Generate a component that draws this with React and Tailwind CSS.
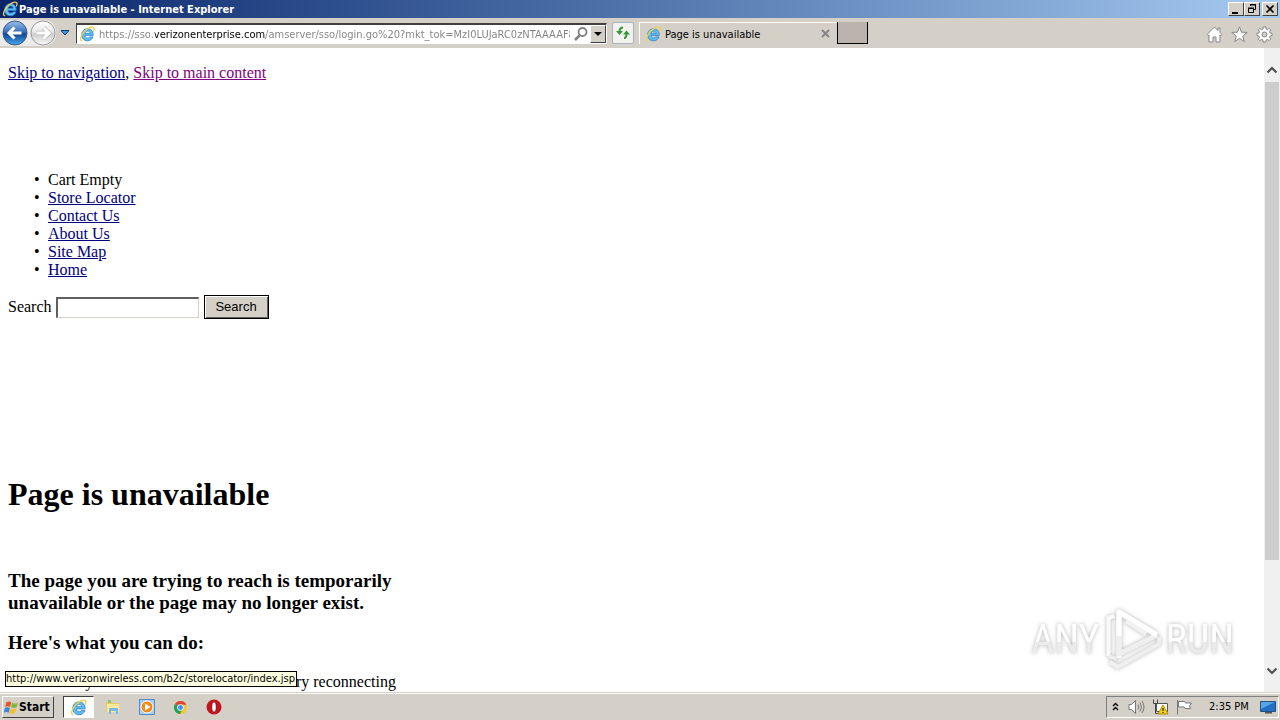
import React from "react";

const uiFont = "font-['DejaVu_Sans_Condensed','DejaVu_Sans',sans-serif]";
const raised =
  "border border-t-white border-l-white border-r-[#404040] border-b-[#404040] bg-[#d4d0c8]";

function IeLogo({ className }) {
  return (
    <svg viewBox="0 0 16 16" className={className} aria-hidden="true">
      <path
        d="M14.200 9.400H6c.1 1.700 1.200 2.600 2.700 2.600 1.100 0 1.800-.4 2.200-1.100h3.100c-.8 2.400-2.800 3.900-5.500 3.900-3.500 0-5.900-2.500-5.900-5.900S5 2.700 8.500 2.700c3.600 0 5.900 2.600 5.700 6.700zM6.100 7.300h5C11 5.900 10 5.100 8.700 5.100S6.300 5.900 6.100 7.300z"
        fill="#62bdf0"
        stroke="#2a83cf"
        strokeWidth=".8"
      />
      <path
        d="M2.600 14.700C.4 14 1.700 9.800 4.900 6 8.200 2.200 12.800.3 14.500 1.600c.8.700.6 2-.1 3.400"
        fill="none"
        stroke="#f2cf4a"
        strokeWidth="1.300"
        strokeLinecap="round"
      />
    </svg>
  );
}

function NavArrow({ forward }) {
  return (
    <svg viewBox="0 0 26 26" className="size-[26px]" aria-hidden="true">
      <defs>
        <linearGradient id={forward ? "fwd" : "back"} x1="0" y1="0" x2="0" y2="1">
          <stop offset="0" stopColor={forward ? "#ffffff" : "#9dc0ea"} />
          <stop offset=".45" stopColor={forward ? "#e9e9e9" : "#3a70ba"} />
          <stop offset=".55" stopColor={forward ? "#cfcfcf" : "#134795"} />
          <stop offset="1" stopColor={forward ? "#f8f8f8" : "#46acee"} />
        </linearGradient>
      </defs>
      <circle cx="13" cy="13" r="12" fill={forward ? "url(#fwd)" : "url(#back)"} stroke={forward ? "#9a9a9a" : "#3d5a86"} />
      <path
        d={forward ? "M6.500 13h12M13.500 7.500l5.500 5.500-5.500 5.500" : "M19.500 13h-12M12.500 7.500L7 13l5.500 5.500"}
        fill="none"
        stroke={forward ? "#b8b8b8" : "none"}
        strokeWidth="4.500"
      />
      <path
        d={forward ? "M6.500 13h12M13.500 7.500l5.500 5.500-5.500 5.500" : "M19.500 13h-12M12.500 7.500L7 13l5.500 5.500"}
        fill="none"
        stroke="#fff"
        strokeWidth="3"
      />
    </svg>
  );
}

function TitleBar() {
  const btn = `${raised} flex h-[14px] w-4 items-center justify-center`;
  return (
    <header className="flex h-[18px] shrink-0 items-center bg-linear-to-r from-[#0a246a] to-[#a6caf0] px-[2px]">
      <IeLogo className="size-4" />
      <span className={`${uiFont} ml-px flex-1 pt-[2px] text-[11px] leading-4 font-bold text-white`}>
        Page is unavailable - Internet Explorer
      </span>
      <button className={btn} aria-label="Minimize">
        <svg viewBox="0 0 14 12" className="h-3 w-[14px]"><path d="M3 9h6v2H3z" /></svg>
      </button>
      <button className={btn} aria-label="Restore">
        <svg viewBox="0 0 14 12" className="h-3 w-[14px]" fill="none" stroke="#000">
          <path d="M5.500 3V1.500h5v5H9M5 2h6M3.500 5.500h5v4h-5zM3 5h6" />
        </svg>
      </button>
      <button className={`${btn} ml-[2px]`} aria-label="Close">
        <svg viewBox="0 0 14 12" className="h-3 w-[14px]"><path d="M3.500 2.500l7 7M10.500 2.500l-7 7" stroke="#000" strokeWidth="1.700" /></svg>
      </button>
    </header>
  );
}

function Toolbar() {
  return (
    <div className="flex h-[30px] shrink-0 items-center bg-[#d4d0c8]">
      <nav className="flex h-[26px] items-center rounded-r-xl bg-[#eceae6] pl-[2px]">
        <button aria-label="Back"><NavArrow /></button>
        <button aria-label="Forward" className="ml-[2px]"><NavArrow forward /></button>
      </nav>
      <button aria-label="Recent pages" className="ml-[4px]">
        <svg viewBox="0 0 10 6" className="h-[6px] w-[10px]"><path d="M1 .5h8L5 5z" fill="#3a9be0" stroke="#123a6e" /></svg>
      </button>
      <div className="ml-[6px] flex h-[21px] w-[531px] items-center border border-t-2 border-[#404040] border-r-white border-b-white bg-white pl-[2px]">
        <IeLogo className="size-4 shrink-0" />
        <input
          aria-label="Address"
          readOnly
          value="https://sso.verizonenterprise.com/amserver/sso/login.go%20?mkt_tok=MzI0LUJaRC0zNTAAAAF8"
          className={`${uiFont} ml-1 h-[18px] min-w-0 flex-1 bg-linear-[90deg,#808080_56px,#000_56px,#000_166px,#808080_166px] bg-clip-text pt-[2px] text-[11px] text-transparent outline-none`}
        />
        <button aria-label="Search" className="ml-1">
          <svg viewBox="0 0 14 14" className="size-[14px]" fill="none" stroke="#808080">
            <circle cx="8.500" cy="5" r="4" strokeWidth="1.800" />
            <path d="M5.500 8.500L1 13" strokeWidth="2.500" />
          </svg>
        </button>
        <button aria-label="Show address bar list" className={`${raised} ml-[2px] flex h-[18px] w-4 items-center justify-center`}>
          <svg viewBox="0 0 8 4" className="h-1 w-2"><path d="M0 0h8L4 4z" /></svg>
        </button>
      </div>
      <button aria-label="Refresh" className="ml-[5px] flex h-[22px] w-[22px] items-center justify-center rounded-[2px] border border-[#a9b4bd] bg-[#f1f1ee]">
        <svg viewBox="0 0 16 16" className="size-4" fill="none" stroke="#35963a" strokeWidth="2">
          <path d="M8 2.500C5.500 2.500 4.500 4 4.500 7M9 13c2 0 2.500-1.500 2.500-4.500" />
          <path d="M1 6h7l-3.500 4zM8 9.500h7L11.500 5.500z" fill="#35963a" stroke="none" />
        </svg>
      </button>
      <div className="ml-[5px] flex h-[22px] w-[198px] items-center border-t border-l border-white pl-[5px]">
        <IeLogo className="size-4" />
        <span className={`${uiFont} ml-1 flex-1 pt-[2px] text-[11px] leading-4 text-black`}>Page is unavailable</span>
        <button aria-label="Close tab" className="mr-[7px]">
          <svg viewBox="0 0 9 9" className="size-[9px]"><path d="M1 1l7 7M8 1L1 8" stroke="#858585" strokeWidth="2" /></svg>
        </button>
      </div>
      <button aria-label="New tab" className="h-[22px] w-[31px] border border-t-0 border-black bg-[#bcb4ac]" />
      <div className="ml-auto flex items-center gap-2 pt-[2px] pr-[7px]">
        <button aria-label="Home">
          <svg viewBox="0 0 17 17" className="size-[17px]" fill="#fff" stroke="#858585" strokeLinejoin="round">
            <path d="M8.500 1L1 8.500l1.200 1.200L3 9v7h4v-5h3v5h4V9l.8.700L16 8.500l-2-2V2h-2v2.500z" />
          </svg>
        </button>
        <button aria-label="Favorites">
          <svg viewBox="0 0 17 17" className="size-[17px]" fill="#fff" stroke="#858585" strokeLinejoin="round">
            <path d="M8.500 .8l2 5.400 5.700.2-4.500 3.600 1.600 5.600-4.800-3.300-4.800 3.300L5.300 10 .8 6.400l5.700-.2z" />
          </svg>
        </button>
        <button aria-label="Tools">
          <svg viewBox="0 0 17 17" className="size-[17px]" fill="#fff" stroke="#858585" strokeLinejoin="round">
            <path d="M7.200 1h2.600l.4 2.100 1.200.5 1.800-1.200 1.500 1.500-1.200 1.800.5 1.200 2 .4v2.400l-2 .4-.5 1.200 1.200 1.800-1.500 1.500-1.800-1.200-1.200.5-.4 2.100H7.200l-.4-2.100-1.200-.5-1.800 1.200-1.500-1.500 1.200-1.800-.5-1.200-2-.4V7.300l2-.4.5-1.200-1.200-1.800 1.500-1.500 1.800 1.200 1.200-.5z" />
            <circle cx="8.500" cy="8.500" r="2.500" fill="#d4d0c8" />
          </svg>
        </button>
      </div>
    </div>
  );
}

function Watermark() {
  const word =
    "font-['Liberation_Sans_Narrow','Roboto_Condensed',sans-serif] bg-linear-to-b from-white from-55% to-[#ebebeb] to-55% bg-clip-text text-[40px] leading-none text-transparent drop-shadow-[0_0_2px_#b4b4b4]";
  return (
    <div className="pointer-events-none absolute right-[46px] bottom-5 flex items-center gap-1">
      <span className={word}>ANY</span>
      <svg viewBox="0 0 58 64" className="h-16 w-[58px] drop-shadow-[0_0_2px_#b4b4b4]" fill="none" strokeLinejoin="round">
        <path d="M4.500 48V10l6-2" stroke="#fafafa" strokeWidth="4" />
        <path d="M15 50V4l38 23" stroke="#fff" strokeWidth="5" />
        <path d="M15 4v42l38-19" stroke="#efefef" strokeWidth="5" />
        <path d="M15 28V4l38 23" stroke="#fff" strokeWidth="5" />
        <path d="M4.500 48l8 3M12 60l43-24v-7" stroke="#efefef" strokeWidth="4" />
        <path d="M6 54l8 5M22 13l20 13" stroke="#f2f2f2" strokeWidth="4" />
      </svg>
      <span className={word}>RUN</span>
    </div>
  );
}

const links = ["Store Locator", "Contact Us", "About Us", "Site Map", "Home"];
const bullet = "before:inline-block before:w-[14px] before:content-['•']";

function Page() {
  return (
    <div className="relative flex min-h-0 flex-1 bg-white">
      <main className="min-w-0 flex-1 overflow-hidden px-2 pt-4 font-['Liberation_Serif',serif] text-[16px] leading-[18px] text-black">
        <p>
          <a href="#navigation" className="text-[#000080] underline">Skip to navigation</a>,{" "}
          <a href="#content" className="text-[#800080] underline">Skip to main content</a>
        </p>
        <ul id="navigation" className="mt-[89px] pl-[26px]">
          <li className={bullet}>Cart Empty</li>
          {links.map((l) => (
            <li key={l} className={bullet}><a href="#content" className="text-[#000080] underline">{l}</a></li>
          ))}
        </ul>
        <form className="mt-4 flex h-6 items-center" onSubmit={(e) => e.preventDefault()}>
          <label htmlFor="q">Search</label>
          <input id="q" className="ml-1 h-[21px] w-[143px] border border-t-2 border-l-2 border-[#d4d0c8] border-t-[#606060] border-l-[#606060] bg-white px-1 outline-none" />
          <button className="ml-[5px] h-6 w-[65px] border border-black bg-[#d4d0c8] font-['Liberation_Sans',sans-serif] text-[13px] shadow-[inset_1px_1px_0_#fff,inset_-1px_-1px_0_#606060]">
            Search
          </button>
        </form>
        <h1 id="content" className="mt-[157px] text-[32px] leading-9 font-bold">Page is unavailable</h1>
        <h3 className="mt-[58px] w-[390px] text-[19px] leading-[22px] font-bold">
          The page you are trying to reach is temporarily unavailable or the page may no longer exist.
        </h3>
        <h3 className="mt-[18px] text-[19px] leading-[22px] font-bold">Here's what you can do:</h3>
        <p className="mt-[19px] whitespace-nowrap">Check with your network administrator and try reconnecting</p>
      </main>
      <div className="flex w-4 shrink-0 flex-col bg-[#f0f0f0] px-px" aria-hidden="true">
        <div className="flex h-[34px] items-center justify-center pt-[10px]">
          <svg viewBox="0 0 12 8" className="h-2 w-3"><path d="M1.500 6.500L6 2l4.500 4.500" fill="none" stroke="#505050" strokeWidth="2.200" /></svg>
        </div>
        <div className="min-h-0 flex-1"><div className="h-[83%] bg-[#cdcdcd]" /></div>
        <div className="flex h-[34px] items-start justify-center pt-[9px]">
          <svg viewBox="0 0 12 8" className="h-2 w-3"><path d="M1.500 1.500L6 6l4.500-4.500" fill="none" stroke="#505050" strokeWidth="2.200" /></svg>
        </div>
      </div>
      <div className={`${uiFont} absolute bottom-[5px] left-[5px] h-4 border border-black bg-[#ffffe1] pr-px text-[11px] leading-[14px] whitespace-nowrap text-black`}>
        http://www.verizonwireless.com/b2c/storelocator/index.jsp
      </div>
      <Watermark />
    </div>
  );
}

function Taskbar() {
  return (
    <footer className="flex h-7 shrink-0 items-center border-t border-[#d4d0c8] bg-[#d4d0c8] shadow-[inset_0_1px_0_#fff]">
      <button className={`${raised} ${uiFont} mt-px ml-[2px] flex h-[22px] w-[52px] items-center pl-px text-[12px] font-bold text-black`}>
        <svg viewBox="0 0 16 16" className="size-[15px] shrink-0">
          <path d="M2.500 2.500c2.200-1.400 3.700-1 5.300 0L6.500 7.500c-1.700-1-3.200-1.200-5.300 0z" fill="#e8542a" />
          <path d="M8.800 3c1.800 1 3.600 1 6-.2l-1.400 5c-2.200 1.200-3.900 1-5.900 0z" fill="#7cb93c" />
          <path d="M1 8.500c2.100-1.200 3.700-1 5.300 0L5 13.500c-1.700-1-3.100-1.200-5.200 0z" fill="#3f86d8" />
          <path d="M7.200 9c1.800 1 3.600 1 5.900-.2l-1.400 5c-2.200 1.200-3.900 1-5.800 0z" fill="#f4bf2c" />
        </svg>
        Start
      </button>
      <div className="mt-px ml-[9px] flex h-[22px] items-center">
        <button aria-label="Internet Explorer" className="flex h-[22px] w-[31px] items-center justify-center border border-[#404040] border-r-white border-b-white bg-white">
          <IeLogo className="size-[17px]" />
        </button>
        <button aria-label="Explorer" className="ml-[11px]">
          <svg viewBox="0 0 16 16" className="size-4">
            <path d="M1 3h5l1 1h7v9H1z" fill="#e8c95c" />
            <path d="M2 5h12v8H2z" fill="#fbe899" />
            <path d="M4 9h9v6h-2v-3H6v3H4z" fill="#76b9e6" />
            <path d="M3 1h3v3H3z" fill="#8fc474" />
          </svg>
        </button>
        <button aria-label="Media Player" className="ml-[18px]">
          <svg viewBox="0 0 16 16" className="size-4">
            <path d="M.5.5h15v15H.5z" fill="#a9cfef" stroke="#4d8dcb" />
            <circle cx="8" cy="8" r="6" fill="#f28a1d" stroke="#fff" />
            <path d="M6 4.500l5.500 3.500L6 11.500z" fill="#fff" />
          </svg>
        </button>
        <button aria-label="Chrome" className="ml-[18px]">
          <svg viewBox="0 0 16 16" className="size-[15px]">
            <circle cx="8" cy="8" r="7" fill="#f6c927" />
            <path d="M8 8L2 4.300A7 7 0 0 1 14.300 5H8z" fill="#dd4437" />
            <path d="M2 4.300A7 7 0 0 0 7.500 15l3-5.500L8 8z" fill="#29a05a" />
            <circle cx="8" cy="8" r="3.200" fill="#4a8df2" stroke="#fff" />
          </svg>
        </button>
        <button aria-label="Opera" className="ml-[18px]">
          <svg viewBox="0 0 16 16" className="size-4">
            <circle cx="8" cy="8" r="7.500" fill="#c5141b" />
            <ellipse cx="8" cy="8" rx="2.300" ry="5.200" fill="#fff" stroke="#8c0d12" />
          </svg>
        </button>
      </div>
      <div className="mt-px mr-px ml-auto flex h-[22px] w-[173px] items-center border border-[#808080] border-r-white border-b-white pl-1">
        <svg viewBox="0 0 9 10" className="h-[10px] w-[9px]"><path d="M2 4l2.500-2.500L7 4M2 8l2.500-2.500L7 8" fill="none" stroke="#000" strokeWidth="1.300" /></svg>
        <svg viewBox="0 0 17 16" className="ml-2 h-4 w-[17px]" fill="none" stroke="#777">
          <path d="M1 5.500h2.500L7.500 1.500v13l-4-4H1z" fill="#fff" />
          <path d="M10 5.500q1.500 2.500 0 5M12 3.500q3 4.500 0 9M14 2q4 6 0 12" />
        </svg>
        <svg viewBox="0 0 17 16" className="ml-[7px] h-4 w-[17px]">
          <path d="M4.500 4.500h11v8h-11z" fill="#fff" stroke="#555" />
          <path d="M1.500.5v4h4v-4M3.500 4.500v10H6" fill="none" stroke="#444" />
          <path d="M11 6l5 9H6z" fill="#f7d21c" stroke="#b58b00" />
          <path d="M10.500 9h1v3h-1zM10.500 13h1v1h-1z" />
        </svg>
        <svg viewBox="0 0 17 16" className="ml-[7px] h-4 w-[17px]" fill="#fff" stroke="#777">
          <path d="M1.500 1v14.500M2.500 2.500h6l1 1.500h6l-2 3 1 2.500H9l-1-1.500H2.500z" />
        </svg>
        <span className={`${uiFont} ml-4 text-[11px] leading-4 whitespace-nowrap text-black`}>2:35 PM</span>
        <svg viewBox="0 0 16 14" className="mr-[2px] ml-auto h-[14px] w-4">
          <path d="M.5 1.500h15v10H.5z" fill="#1f6fc5" stroke="#26507e" />
          <path d="M1 2h14L1 9z" fill="#58a4e6" />
          <path d="M5 12h7v1.500H5z" fill="#555" />
        </svg>
      </div>
    </footer>
  );
}

export default function App() {
  return (
    <div className="flex h-screen flex-col overflow-hidden">
      <TitleBar />
      <Toolbar />
      <Page />
      <Taskbar />
    </div>
  );
}
